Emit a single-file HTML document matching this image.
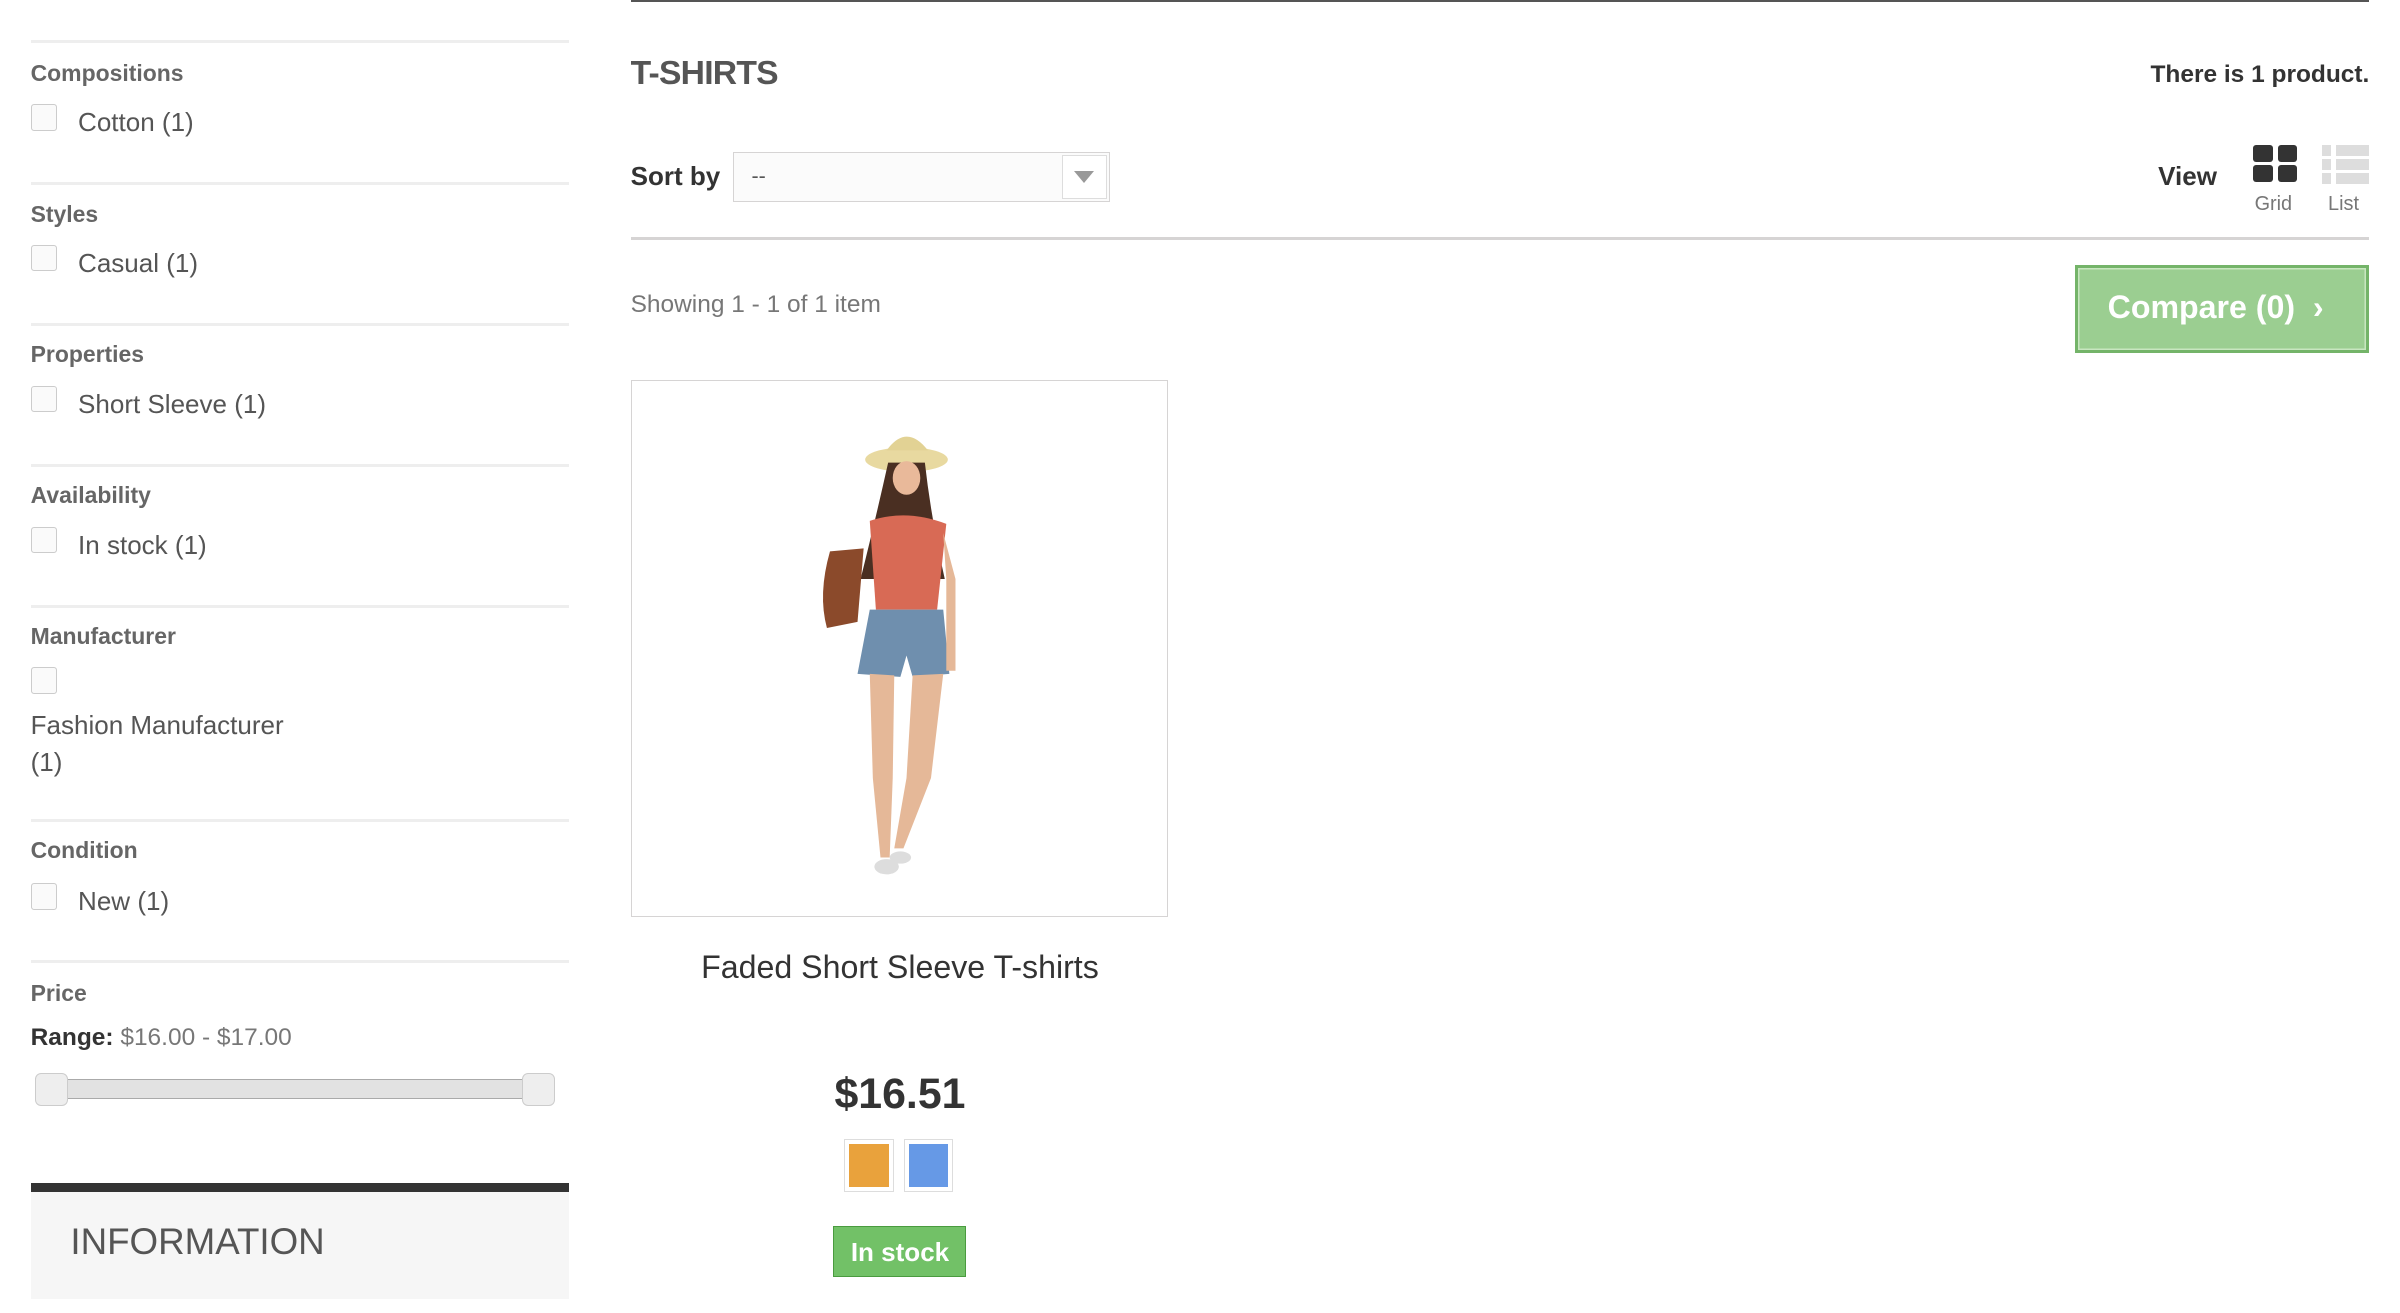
<!DOCTYPE html>
<html><head><meta charset="utf-8"><style>
html,body{margin:0;padding:0;background:#fff;overflow:hidden}
#w{width:1568px;height:858px;position:relative;zoom:1.5306;font-family:"Liberation Sans",Arial,sans-serif;color:#555}
.a{position:absolute;white-space:nowrap}
.hr{position:absolute;left:20px;width:352px;height:2px;background:#eee}
.h{position:absolute;left:20px;font-size:15px;font-weight:bold;color:#666}
.cb{position:absolute;left:20px;width:16px;height:16px;border:1px solid #ccc;background:#fafafa;border-radius:2px}
.lb{position:absolute;left:51px;font-size:17px;color:#555}
</style></head><body><div id="w">
<div class="hr" style="top:26px"></div>
<div class="h" style="top:39px">Compositions</div><div class="cb" style="top:68px"></div><div class="lb" style="top:70px">Cotton (1)</div>
<div class="hr" style="top:119px"></div>
<div class="h" style="top:131px">Styles</div><div class="cb" style="top:160px"></div><div class="lb" style="top:162px">Casual (1)</div>
<div class="hr" style="top:211px"></div>
<div class="h" style="top:223px">Properties</div><div class="cb" style="top:252px"></div><div class="lb" style="top:254px">Short Sleeve (1)</div>
<div class="hr" style="top:303px"></div>
<div class="h" style="top:315px">Availability</div><div class="cb" style="top:344px"></div><div class="lb" style="top:346px">In stock (1)</div>
<div class="hr" style="top:395px"></div>
<div class="h" style="top:407px">Manufacturer</div><div class="cb" style="top:436px"></div>
<div class="lb" style="top:462px;left:20px;line-height:24px;white-space:normal">Fashion Manufacturer<br>(1)</div>
<div class="hr" style="top:535px"></div>
<div class="h" style="top:547px">Condition</div><div class="cb" style="top:577px"></div><div class="lb" style="top:579px">New (1)</div>
<div class="hr" style="top:627px"></div>
<div class="h" style="top:640px">Price</div>
<div class="a" style="left:20px;top:669px;font-size:16px;color:#777"><b style="color:#333">Range:</b> $16.00 - $17.00</div>
<div class="a" style="left:36px;top:705px;width:314px;height:12px;background:#e2e2e2;border-top:1px solid #aaa;border-bottom:1px solid #aaa"></div>
<div class="a" style="left:23px;top:701px;width:20px;height:20px;background:#eee;border:1px solid #ccc;border-radius:4px"></div>
<div class="a" style="left:341px;top:701px;width:20px;height:20px;background:#eee;border:1px solid #ccc;border-radius:4px"></div>
<div class="a" style="left:20px;top:773px;width:352px;height:6px;background:#333"></div>
<div class="a" style="left:20px;top:779px;width:352px;height:70px;background:#f6f6f6"></div>
<div class="a" style="left:46px;top:798px;font-size:24px;color:#555">INFORMATION</div>

<div class="a" style="left:412px;top:0;width:1136px;height:1px;background:#555"></div>
<div class="a" style="left:412px;top:36px;font-size:22px;color:#555;font-weight:bold;letter-spacing:-0.5px">T-SHIRTS</div>
<div class="a" style="right:20px;top:40px;font-size:16px;font-weight:bold;color:#333">There is 1 product.</div>
<div class="a" style="left:412px;top:105px;font-size:17px;font-weight:bold;color:#333">Sort by</div>
<div class="a" style="left:479px;top:99px;width:245px;height:32px;border:1px solid #d6d4d4;background:#fbfbfb"></div>
<div class="a" style="left:491px;top:107px;font-size:14px;color:#555">--</div>
<div class="a" style="left:694px;top:101px;width:28px;height:28px;border:1px solid #ddd;background:#fff"></div>
<div class="a" style="left:702px;top:112px;width:0;height:0;border-left:7px solid transparent;border-right:7px solid transparent;border-top:8px solid #999"></div>
<div class="a" style="left:1410px;top:105px;font-size:17px;font-weight:bold;color:#333">View</div>
<div class="a" style="left:1472px;top:95px;width:13px;height:11px;background:#333;border-radius:2px"></div>
<div class="a" style="left:1488px;top:95px;width:13px;height:11px;background:#333;border-radius:2px"></div>
<div class="a" style="left:1472px;top:108px;width:13px;height:11px;background:#333;border-radius:2px"></div>
<div class="a" style="left:1488px;top:108px;width:13px;height:11px;background:#333;border-radius:2px"></div>
<div class="a" style="left:1517px;top:95px;width:6px;height:7px;background:#ddd"></div><div class="a" style="left:1526px;top:95px;width:22px;height:7px;background:#ddd"></div>
<div class="a" style="left:1517px;top:104px;width:6px;height:7px;background:#ddd"></div><div class="a" style="left:1526px;top:104px;width:22px;height:7px;background:#ddd"></div>
<div class="a" style="left:1517px;top:113px;width:6px;height:7px;background:#ddd"></div><div class="a" style="left:1526px;top:113px;width:22px;height:7px;background:#ddd"></div>
<div class="a" style="left:1473px;top:126px;font-size:13px;color:#777">Grid</div>
<div class="a" style="left:1521px;top:126px;font-size:13px;color:#777">List</div>
<div class="a" style="left:412px;top:155px;width:1136px;height:2px;background:#d6d4d4"></div>
<div class="a" style="left:412px;top:190px;font-size:16px;color:#777">Showing 1 - 1 of 1 item</div>
<div class="a" style="left:1356px;top:173px;width:188px;height:54px;background:#9bce91;border:2px solid #74b469;box-shadow:inset 0 0 0 1px #c8e6c0"></div>
<div class="a" style="left:1377px;top:189px;font-size:21px;font-weight:bold;color:#fff">Compare (0) &nbsp;›</div>

<div class="a" style="left:412px;top:248px;width:350px;height:350px;border:1px solid #d6d4d4;background:#fff"></div>
<svg class="a" style="left:412px;top:248px" width="352" height="352" viewBox="0 0 352 352">
<ellipse cx="180" cy="52" rx="27" ry="8" fill="#e8d9a0"/>
<path d="M167 46 Q180 28 194 46 Z" fill="#e2d294"/>
<path d="M168 54 Q160 90 150 130 L205 130 Q196 90 192 54 Z" fill="#4a2f22"/>
<ellipse cx="180" cy="64" rx="9" ry="11" fill="#e9b99a"/>
<path d="M156 92 Q180 84 206 94 L200 150 L160 150 Z" fill="#d86a55"/>
<path d="M130 112 Q122 140 128 162 L148 158 L152 110 Z" fill="#8b4a2b"/>
<path d="M156 150 L204 150 L208 192 L184 194 L180 180 L176 194 L148 192 Z" fill="#6f8fae"/>
<path d="M156 192 L172 193 L171 260 L169 312 L163 312 L158 260 Z" fill="#e5b898"/>
<path d="M184 193 L204 192 L196 260 L178 306 L172 306 L180 260 Z" fill="#e5b898"/>
<path d="M204 100 L212 130 L212 190 L206 190 L206 130 Z" fill="#e5b898"/>
<ellipse cx="167" cy="318" rx="8" ry="5" fill="#ddd"/><ellipse cx="176" cy="312" rx="7" ry="4" fill="#ddd"/>
</svg>
<div class="a" style="left:412px;top:620px;width:352px;text-align:center;font-size:21px;color:#333">Faded Short Sleeve T-shirts</div>
<div class="a" style="left:412px;top:699px;width:352px;text-align:center;font-size:28px;font-weight:bold;color:#333">$16.51</div>
<div class="a" style="left:552px;top:745px;width:26px;height:28px;background:#e9a23c;border:3px solid #fff;outline:1px solid #ddd"></div>
<div class="a" style="left:591px;top:745px;width:26px;height:28px;background:#6699e6;border:3px solid #fff;outline:1px solid #ddd"></div>
<div class="a" style="left:544px;top:801px;width:86px;height:32px;background:#72c167;border:1px solid #4a9b3f"></div>
<div class="a" style="left:544px;top:808px;width:88px;text-align:center;font-size:17px;font-weight:bold;color:#fff">In stock</div>
</div></body></html>
